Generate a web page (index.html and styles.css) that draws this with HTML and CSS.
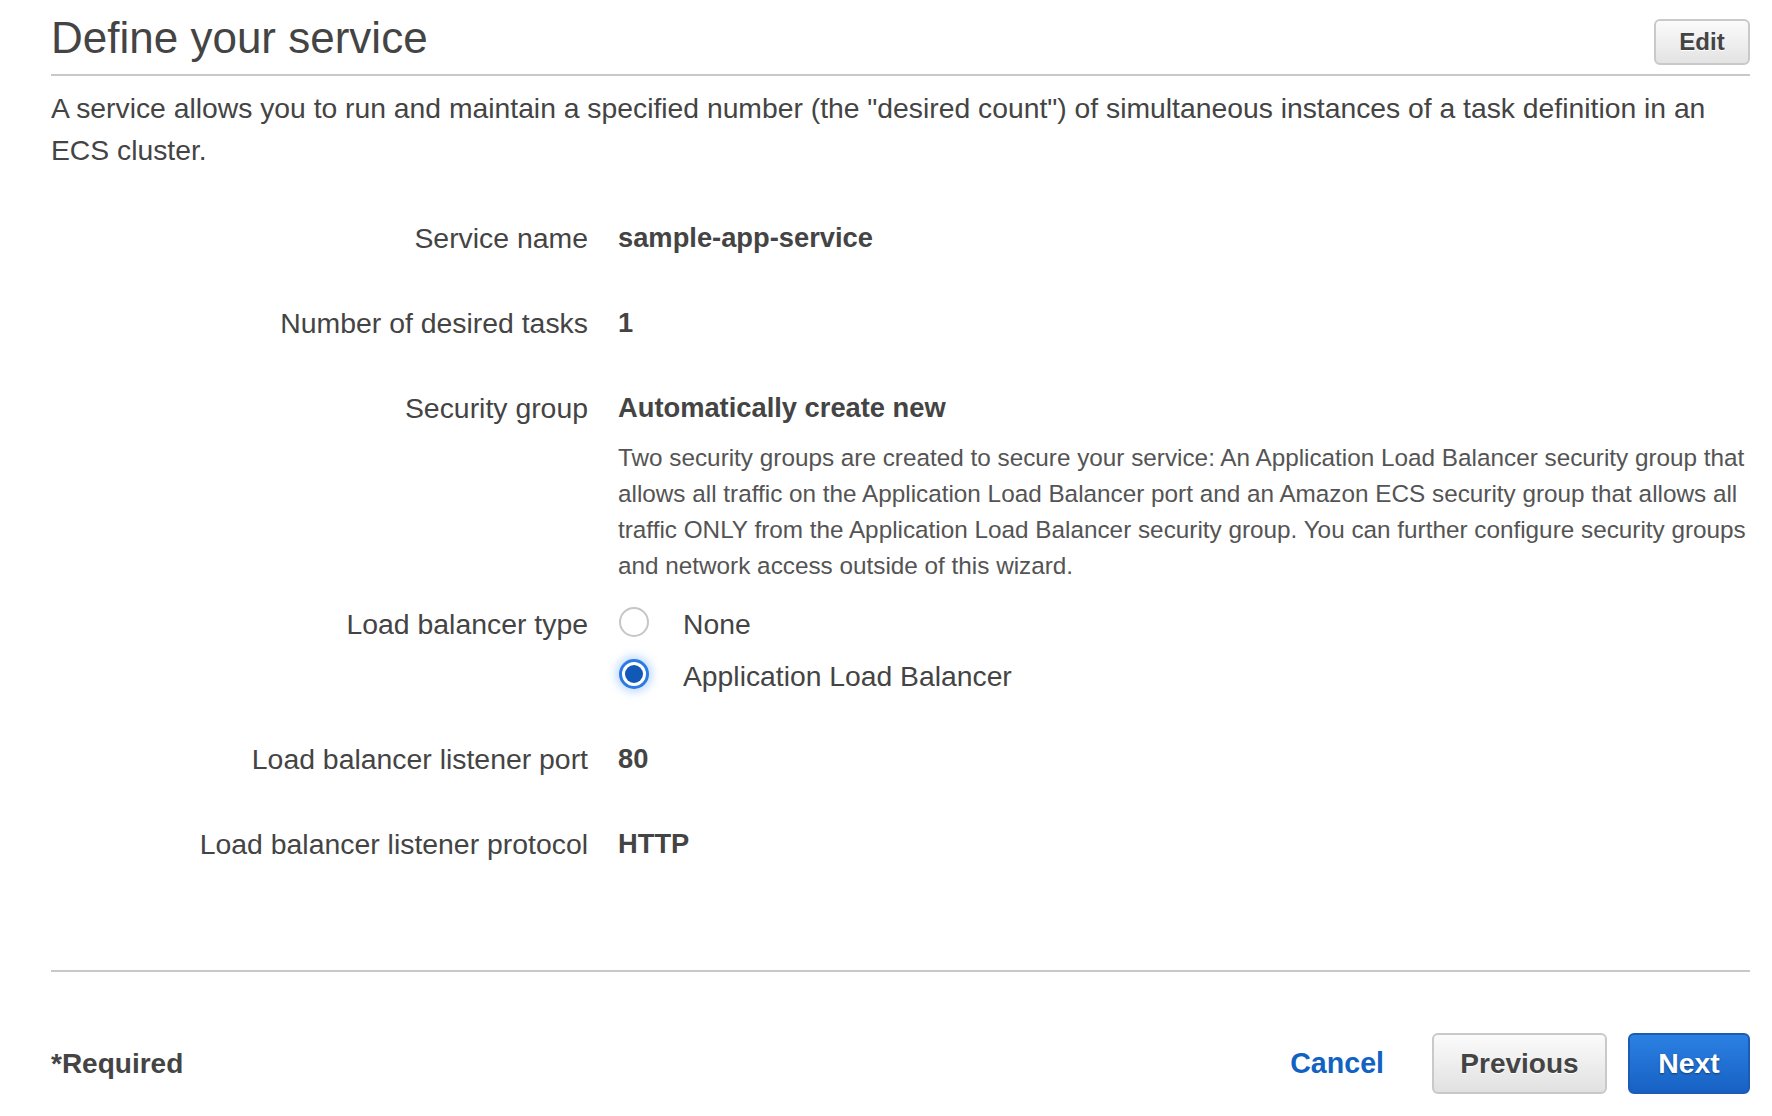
FILE: index.html
```html
<!DOCTYPE html>
<html lang="en">
<head>
<meta charset="utf-8">
<title>Define your service</title>
<link rel="stylesheet" href="styles.css">
</head>
<body>
<div class="page">
  <div class="header">
    <h1 class="title">Define your service</h1>
    <button class="btn btn-edit" type="button">Edit</button>
  </div>
  <p class="intro">A service allows you to run and maintain a specified number (the "desired count") of simultaneous instances of a task definition in an ECS cluster.</p>

  <div class="form">
    <div class="row">
      <div class="label">Service name</div>
      <div class="value strong">sample-app-service</div>
    </div>
    <div class="row">
      <div class="label">Number of desired tasks</div>
      <div class="value strong">1</div>
    </div>
    <div class="row row-security">
      <div class="label">Security group</div>
      <div class="value">
        <div class="strong">Automatically create new</div>
        <p class="help">Two security groups are created to secure your service: An Application Load Balancer security group that allows all traffic on the Application Load Balancer port and an Amazon ECS security group that allows all traffic ONLY from the Application Load Balancer security group. You can further configure security groups and network access outside of this wizard.</p>
      </div>
    </div>
    <div class="row row-radio">
      <div class="label">Load balancer type</div>
      <div class="value radios">
        <div class="radio-line"><span class="radio"></span><span class="radio-text">None</span></div>
        <div class="radio-line"><span class="radio checked"><span class="dot"></span></span><span class="radio-text">Application Load Balancer</span></div>
      </div>
    </div>
    <div class="row">
      <div class="label">Load balancer listener port</div>
      <div class="value strong">80</div>
    </div>
    <div class="row row-last">
      <div class="label">Load balancer listener protocol</div>
      <div class="value strong">HTTP</div>
    </div>
  </div>

  <div class="footer">
    <div class="required">*Required</div>
    <div class="actions">
      <a class="cancel" href="#">Cancel</a>
      <button class="btn btn-prev" type="button">Previous</button>
      <button class="btn btn-next" type="button">Next</button>
    </div>
  </div>
</div>
</body>
</html>
```

FILE: styles.css
```css
html, body {
  margin: 0;
  padding: 0;
  background: #ffffff;
}

body {
  font-family: "Liberation Sans", Arial, Helvetica, sans-serif;
  color: #444444;
}

.page {
  padding: 0 22px 0 51px;
}

.header {
  display: flex;
  justify-content: space-between;
  align-items: flex-end;
  padding-top: 13px;
  padding-bottom: 11px;
  border-bottom: 2px solid #c8c8c8;
}

.title {
  margin: 0;
  font-size: 44px;
  line-height: 50px;
  font-weight: normal;
  color: #444444;
}

.btn {
  font-family: "Liberation Sans", Arial, Helvetica, sans-serif;
  font-weight: bold;
  border-radius: 6px;
  cursor: pointer;
  box-sizing: border-box;
  padding: 0;
  line-height: 1;
}

.btn-edit {
  width: 96px;
  height: 46px;
  margin-bottom: -2px;
  font-size: 24px;
  color: #444444;
  background: linear-gradient(#fbfbfb, #e3e3e3);
  border: 2px solid #c9c9c9;
  text-shadow: 0 1px 0 #ffffff;
}

.intro {
  margin: 11px 0 0;
  font-size: 28.3px;
  line-height: 42px;
}

.form {
  margin-top: 49px;
  padding-bottom: 108px;
  border-bottom: 2px solid #c8c8c8;
}

.row {
  display: grid;
  grid-template-columns: 537px 1fr;
  column-gap: 30px;
  font-size: 28.4px;
  line-height: 36px;
  margin-bottom: 49px;
}

.row-last {
  margin-bottom: 0;
}

.label {
  text-align: right;
  color: #444444;
}

.strong {
  font-weight: bold;
  font-size: 27.3px;
}

.row-security {
  margin-bottom: 22px;
}

.help {
  margin: 14px -20px 0 0;
  font-size: 24.3px;
  line-height: 36px;
  color: #545454;
}

.row-radio {
  margin-bottom: 47px;
}

.radios {
  display: flex;
  flex-direction: column;
  gap: 16px;
}

.radio-line {
  display: flex;
  align-items: center;
  height: 36px;
}

.radio-text {
  font-size: 28.3px;
}

.radio {
  box-sizing: border-box;
  width: 30px;
  height: 30px;
  border-radius: 50%;
  border: 2px solid #c6c6c6;
  background: #ffffff;
  margin-left: 1px;
  margin-right: 34px;
  display: flex;
  align-items: center;
  justify-content: center;
  flex: none;
  position: relative;
  top: -2px;
}

.radio.checked {
  border: 3px solid #2a7ae2;
  box-shadow: 0 0 8px 3px rgba(70, 150, 255, 0.35);
}

.dot {
  width: 18px;
  height: 18px;
  border-radius: 50%;
  background: #1259b7;
}

.footer {
  display: flex;
  justify-content: space-between;
  align-items: center;
  padding-top: 61px;
  padding-bottom: 23px;
}

.required {
  font-size: 28px;
  font-weight: bold;
  color: #444444;
}

.actions {
  display: flex;
  align-items: center;
}

.cancel {
  font-size: 28.6px;
  font-weight: bold;
  color: #1262c2;
  text-decoration: none;
  margin-right: 48px;
}

.btn-prev {
  width: 175px;
  height: 61px;
  font-size: 28px;
  color: #444444;
  background: linear-gradient(#fbfbfb, #e1e1e1);
  border: 2px solid #c9c9c9;
  text-shadow: 0 1px 0 #ffffff;
  margin-right: 21px;
}

.btn-next {
  width: 122px;
  height: 61px;
  font-size: 28.4px;
  color: #ffffff;
  background: linear-gradient(#2b81e2, #1761c4);
  border: 2px solid #1c5cb4;
  text-shadow: 0 1px 2px rgba(0, 0, 0, 0.45);
}
```
